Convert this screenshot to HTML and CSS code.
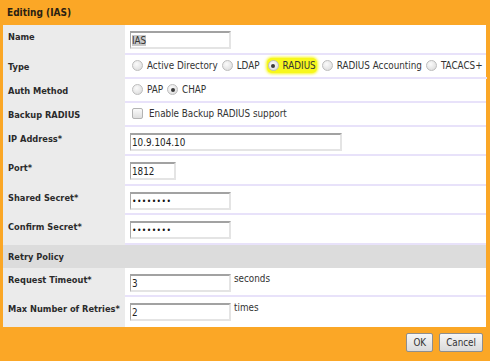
FILE: index.html
```html
<!DOCTYPE html>
<html>
<head>
    <meta charset="UTF-8">
    <title>Editing (IAS)</title>
    <link rel="stylesheet" href="styles.css">
</head>
<body>
    <div class="dialog">
        <div class="dialog-title">Editing (IAS)</div>

        <div class="dialog-body">
            <div class="row">
                <div class="label">Name</div>
                <div class="value">
                    <div class="field w100"><span class="selected-text">IAS</span></div>
                </div>
            </div>

            <div class="row short">
                <div class="label">Type</div>
                <div class="value options">
                    <span class="option"><span class="radio"></span>Active Directory</span>
                    <span class="option"><span class="radio"></span>LDAP</span>
                    <span class="option highlight"><span class="radio checked"></span>RADIUS</span>
                    <span class="option"><span class="radio"></span>RADIUS Accounting</span>
                    <span class="option"><span class="radio"></span>TACACS+</span>
                </div>
            </div>

            <div class="row short">
                <div class="label">Auth Method</div>
                <div class="value options">
                    <span class="option"><span class="radio"></span>PAP</span>
                    <span class="option"><span class="radio checked"></span>CHAP</span>
                </div>
            </div>

            <div class="row short">
                <div class="label">Backup RADIUS</div>
                <div class="value options">
                    <span class="option"><span class="checkbox"></span>Enable Backup RADIUS support</span>
                </div>
            </div>

            <div class="row">
                <div class="label">IP Address*</div>
                <div class="value">
                    <div class="field w211">10.9.104.10</div>
                </div>
            </div>

            <div class="row">
                <div class="label">Port*</div>
                <div class="value">
                    <div class="field w45">1812</div>
                </div>
            </div>

            <div class="row">
                <div class="label">Shared Secret*</div>
                <div class="value">
                    <div class="field w100 secret">&#8226;&#8226;&#8226;&#8226;&#8226;&#8226;&#8226;&#8226;</div>
                </div>
            </div>

            <div class="row">
                <div class="label">Confirm Secret*</div>
                <div class="value">
                    <div class="field w100 secret">&#8226;&#8226;&#8226;&#8226;&#8226;&#8226;&#8226;&#8226;</div>
                </div>
            </div>

            <div class="section">Retry Policy</div>

            <div class="row">
                <div class="label">Request Timeout*</div>
                <div class="value">
                    <div class="field w100">3</div>
                    <span class="unit">seconds</span>
                </div>
            </div>

            <div class="row last">
                <div class="label">Max Number of Retries*</div>
                <div class="value">
                    <div class="field w100">2</div>
                    <span class="unit">times</span>
                </div>
            </div>
        </div>

        <div class="dialog-footer">
            <button class="btn">OK</button>
            <button class="btn">Cancel</button>
        </div>
    </div>
</body>
</html>
```

FILE: styles.css
```css
body {
    margin: 0;
    font-family: "DejaVu Sans Condensed", "DejaVu Sans", sans-serif;
    font-size: 9.8px;
    color: #222;
    background-color: white;
}

.dialog {
    width: 490px;
    height: 361px;
    background-color: #fba726;
    display: flex;
    flex-direction: column;
}

.dialog-title {
    height: 25px;
    line-height: 25px;
    padding-left: 7px;
    font-weight: bold;
    font-size: 10px;
    color: #2a2113;
}

.dialog-body {
    margin: 0 4px 0 3px;
    background-color: white;
}

.row {
    display: flex;
    height: 29.5px;
}

.row.short {
    height: 24px;
}

.label {
    width: 117px;
    flex-shrink: 0;
    padding: 6px 0 0 5px;
    background-color: #ebebeb;
    font-weight: bold;
    font-size: 9.2px;
    color: #2b2b2b;
    white-space: nowrap;
}

.value {
    flex: 1;
    display: flex;
    align-items: flex-start;
    padding: 6px 0 0 5px;
    border-bottom: 2px solid #e8e2fa;
    white-space: nowrap;
}

.row.last .value {
    border-bottom: none;
}

.value.options {
    align-items: center;
    padding-top: 0;
    padding-left: 7px;
}

.option {
    display: flex;
    align-items: center;
    flex-shrink: 0;
    margin-right: 4px;
    padding: 2px 0;
    color: #333;
}

.option.highlight {
    background-color: #f7f71c;
    border-radius: 5px;
    box-shadow: 0 0 3px 1px #f7f71c;
    padding: 2px 1px;
    margin-left: 3px;
    margin-right: 5px;
}

.radio {
    width: 9px;
    height: 9px;
    border-radius: 50%;
    border: 1px solid #bdbdbd;
    background: radial-gradient(circle at 40% 35%, #fbfbfb 0%, #e2e2e2 70%, #cfcfcf 100%);
    margin-right: 4px;
    position: relative;
}

.radio.checked::after {
    content: "";
    position: absolute;
    left: 2.5px;
    top: 2.5px;
    width: 4px;
    height: 4px;
    border-radius: 50%;
    background-color: #3a3a3a;
}

.checkbox {
    width: 9px;
    height: 9px;
    border: 1px solid #b3b3b3;
    border-radius: 2px;
    background: linear-gradient(#fafafa, #dedede);
    margin-right: 6px;
}

.field {
    height: 14px;
    line-height: 15px;
    padding-left: 1px;
    border-top: 2px solid #a2a2a2;
    border-left: 1px solid #a8a8a8;
    border-right: 2px solid #e4e4e4;
    border-bottom: 2px solid #e4e4e4;
    background-color: white;
    color: #222;
    font-size: 9.8px;
}

.w100 { width: 97px; }
.w211 { width: 208px; }
.w45 { width: 42px; }

.selected-text {
    background-color: #c9c9c9;
    color: #333;
}

.secret {
    font-size: 8.5px;
    letter-spacing: 0.4px;
    color: #111;
}

.unit {
    margin-left: 3px;
    margin-top: -1px;
    color: #333;
}

.section {
    height: 23px;
    line-height: 23px;
    padding-left: 5px;
    background-color: #dcdcdc;
    font-weight: bold;
    font-size: 9.2px;
    color: #2b2b2b;
}

.dialog-footer {
    flex: 1;
    display: flex;
    justify-content: flex-end;
    align-items: center;
    gap: 6px;
    padding: 0 7px 2px 0;
}

.btn {
    height: 19px;
    padding: 0 6px;
    font-family: "DejaVu Sans Condensed", "DejaVu Sans", sans-serif;
    font-size: 9.8px;
    color: #333;
    border: 1px solid #8e8e8e;
    border-radius: 2px;
    background: linear-gradient(#f6f6f6, #dadada);
}
```
